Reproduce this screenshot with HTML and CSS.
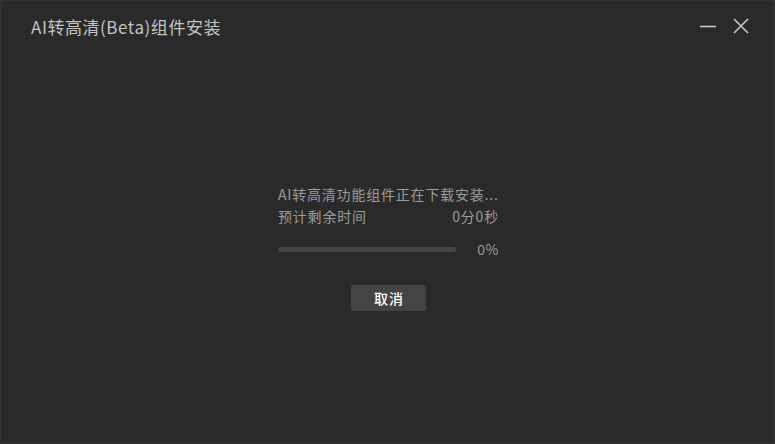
FILE: index.html
```html
<!DOCTYPE html>
<html>
<head>
<meta charset="utf-8">
<link rel="stylesheet" href="styles.css">
</head>
<body>
<div class="window">
  <div class="titlebar">
    <div class="title">AI转高清(Beta)组件安装</div>
    <div class="controls">
      <svg class="ctl" width="16" height="16" viewBox="0 0 16 16"><line x1="0" y1="8.5" x2="16" y2="8.5" stroke="#c8c8c8" stroke-width="1.6"/></svg>
      <svg class="ctl" width="16" height="16" viewBox="0 0 16 16"><path d="M1 1 L15 15 M15 1 L1 15" stroke="#c8c8c8" stroke-width="1.6" fill="none"/></svg>
    </div>
  </div>
  <div class="content">
    <div class="panel">
      <div class="line">AI转高清功能组件正在下载安装...</div>
      <div class="line row"><span>预计剩余时间</span><span>0分0秒</span></div>
      <div class="progress-row">
        <div class="track"><div class="fill" style="width:0%"></div></div>
        <span class="pct">0%</span>
      </div>
      <div class="btn-row"><button class="btn">取消</button></div>
    </div>
  </div>
</div>
</body>
</html>
```
FILE: styles.css
```css
html, body {
  margin: 0;
  padding: 0;
  background: #2a2a2a;
}
body {
  width: 775px;
  height: 444px;
  overflow: hidden;
  font-family: "Microsoft YaHei", "Noto Sans CJK SC", sans-serif;
}
.window {
  width: 773px;
  height: 442px;
  border: 1px solid #333333;
  background: #2a2a2a;
  display: flex;
  flex-direction: column;
}
.titlebar {
  height: 50px;
  display: flex;
  align-items: center;
  justify-content: space-between;
  padding: 0 25px 0 30px;
}
.title {
  font-size: 17px;
  color: #c4c4c4;
  letter-spacing: 0.55px;
  margin-top: 1px;
}
.controls {
  display: flex;
  gap: 17px;
  align-items: center;
}
.ctl { display: block; }
.content {
  padding-top: 132px;
  display: flex;
  justify-content: center;
}
.panel {
  width: 221px;
  margin-left: 2px;
  font-size: 14px;
  letter-spacing: 0.8px;
  color: #9c9c9c;
}
.line {
  height: 22px;
  line-height: 22px;
  white-space: nowrap;
}
.row {
  display: flex;
  justify-content: space-between;
}
.progress-row {
  display: flex;
  align-items: center;
  justify-content: space-between;
  margin-top: 14px;
  height: 16px;
}
.track {
  width: 178px;
  height: 5px;
  border-radius: 3px;
  background: #444444;
  overflow: hidden;
}
.fill {
  height: 100%;
  background: #3a8ef0;
}
.pct {
  color: #9c9c9c;
  font-size: 14px;
  letter-spacing: 0.5px;
}
.btn-row {
  display: flex;
  justify-content: center;
  margin-top: 28px;
}
.btn {
  width: 75px;
  height: 26px;
  border: none;
  border-radius: 3px;
  background: #444444;
  color: #ffffff;
  font-family: "Microsoft YaHei", "Noto Sans CJK SC", sans-serif;
  font-size: 14px;
  letter-spacing: 1px;
  font-weight: 500;
  padding: 0 0 0 1px;
}
```
